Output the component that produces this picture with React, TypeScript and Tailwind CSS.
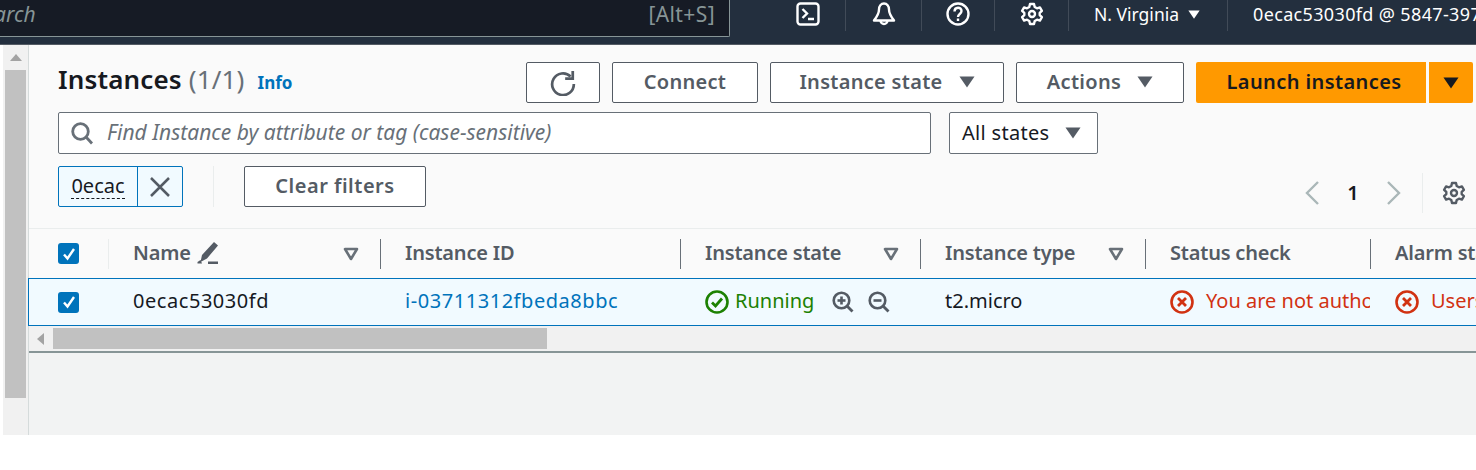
import React from 'react';

const font = { fontFamily: '"Noto Sans", "Liberation Sans", sans-serif' };

const Caret = ({ className = 'w-[16px] h-[12px] text-[#545b64]' }: { className?: string }) => (
  <svg viewBox="0 0 16 12" className={className}>
    <path d="M0.5 0.5h15L8 11.5z" fill="currentColor" />
  </svg>
);

const SortCaret = () => (
  <svg viewBox="0 0 16 14" className="w-[16px] h-[14px] text-[#687078]">
    <path d="M2 2h12L8 12z" fill="none" stroke="currentColor" strokeWidth="2.6" strokeLinejoin="round" />
  </svg>
);

const CheckBox = () => (
  <div className="w-[21px] h-[21px] rounded-[3px] bg-[#0073bb] flex items-center justify-center">
    <svg viewBox="0 0 16 16" className="w-[16px] h-[16px]">
      <path d="M3 8.5l3.5 4L13 3" fill="none" stroke="#fff" strokeWidth="2.4" />
    </svg>
  </div>
);

const Gear = ({ className }: { className: string }) => (
  <svg viewBox="0 0 24 24" className={className} fill="none" stroke="currentColor" strokeWidth="2.4" strokeLinejoin="round">
    <path d="M10 2h4l.7 3 2.3 1.3 2.9-.9 2 3.4-2.2 2.1v2.2l2.2 2.1-2 3.4-2.9-.9L14.700 19l-.7 3h-4l-.7-3L7 17.700l-2.900.9-2-3.400 2.200-2.100V10.900L2.100 8.800l2-3.400 2.900.9L9.300 5z" />
    <circle cx="12" cy="12" r="3" />
  </svg>
);

const Zoom = ({ minus }: { minus?: boolean }) => (
  <svg viewBox="0 0 22 22" className="w-[22px] h-[22px] text-[#545b64]" fill="none" stroke="currentColor">
    <circle cx="9.500" cy="9.500" r="7.800" strokeWidth="2.600" />
    <path d="M15 15l5.500 5.500" strokeWidth="2.800" />
    <path d="M5.500 9.500h8" strokeWidth="2.600" />
    {!minus && <path d="M9.500 5.500v8" strokeWidth="2.600" />}
  </svg>
);

const ErrorIcon = () => (
  <svg viewBox="0 0 24 24" className="w-[24px] h-[24px] shrink-0 text-[#d13212]" fill="none" stroke="currentColor">
    <circle cx="12" cy="12" r="10.500" strokeWidth="2.600" />
    <path d="M8 8l8 8M16 8l-8 8" strokeWidth="2.800" />
  </svg>
);

const Button = ({ children, className = '' }: { children: React.ReactNode; className?: string }) => (
  <div className={`h-[41px] pb-[2px] flex items-center justify-center border border-[#545b64] rounded-[2px] bg-white text-[#545b64] text-[20px] font-semibold tracking-[0.3px] ${className}`}>
    {children}
  </div>
);

const NavDivider = () => <div className="w-px h-[31px] shrink-0 bg-[#414b58]" />;

const NavIcon = ({ children, className }: { children: React.ReactNode; className: string }) => (
  <div className={`h-[31px] shrink-0 flex items-center justify-center text-white pb-[4px] ${className}`}>{children}</div>
);

const columns = 'grid grid-cols-[79px_272px_300px_240px_225px_225px_1fr]';

const HeadCell = ({ label, sort }: { label: string; sort?: boolean }) => (
  <div className="h-[30px] border-l border-[#687078] pl-[24px] pb-[2px] flex items-center text-[20px] font-semibold tracking-[-0.2px] text-[#545b64] whitespace-nowrap overflow-hidden">
    <span>{label}</span>
    {sort && <span className="ml-auto mr-[21px] mt-[2px] flex"><SortCaret /></span>}
  </div>
);

export default function App() {
  return (
    <div className="w-[1476px] h-[470px] bg-white overflow-hidden flex flex-col" style={font}>
      {/* top nav */}
      <header className="h-[45px] shrink-0 bg-[#232f3e] border-b border-[#545b64] flex items-start overflow-hidden">
        <div className="w-[730px] shrink-0 h-[37px] bg-[#161b25] border-r border-b border-[#879596] rounded-br-[2px] flex items-center justify-between pr-[14px] pb-[6px] text-[21px] text-[#879596] overflow-hidden">
          <span className="-ml-[27px] italic">Search</span>
          <span className="tracking-[0.4px]">[Alt+S]</span>
        </div>
        <div className="w-[41px] shrink-0" />
        <NavIcon className="w-[74px]">
          <svg viewBox="0 0 24 24" className="w-[24px] h-[24px]" fill="none" stroke="currentColor" strokeWidth="2.400">
            <rect x="1.500" y="1.500" width="21" height="21" rx="3" />
            <path d="M6.500 7l4.500 4.500-4.500 4.500M12 17h6" />
          </svg>
        </NavIcon>
        <NavDivider />
        <NavIcon className="w-[75px]">
          <svg viewBox="0 0 24 24" className="w-[24px] h-[24px]" fill="none" stroke="currentColor" strokeWidth="2.400" strokeLinejoin="round">
            <path d="M12 1.500c-3 0-5 2.500-5 6 0 4.500-2 7-5 11h20c-3-4-5-6.500-5-11 0-3.500-2-6-5-6z" />
            <path d="M8.500 18.500a3.500 3.500 0 0 0 7 0" />
          </svg>
        </NavIcon>
        <NavDivider />
        <NavIcon className="w-[72px]">
          <svg viewBox="0 0 24 24" className="w-[24px] h-[24px]" fill="none" stroke="currentColor" strokeWidth="2.400">
            <circle cx="12" cy="12" r="10.500" />
            <path d="M8.500 9.500c0-5 7-5 7-.5 0 3-3.500 3-3.500 6" />
            <path d="M12 16.500v2.500" />
          </svg>
        </NavIcon>
        <NavDivider />
        <NavIcon className="w-[73px]"><Gear className="w-[24px] h-[24px]" /></NavIcon>
        <NavDivider />
        <div className="w-[158px] shrink-0 h-[31px] pl-[25px] flex items-center gap-[9px] text-white text-[17.5px] whitespace-nowrap pb-[3px]">
          <span>N. Virginia</span>
          <Caret className="w-[12px] h-[9px] text-white" />
        </div>
        <NavDivider />
        <div className="pl-[25px] h-[31px] flex items-center text-white text-[18px] tracking-[0.35px] whitespace-nowrap pb-[3px]">0ecac53030fd @ 5847-3973-1234</div>
      </header>

      <div className="h-[390px] shrink-0 flex pl-[3px]">
        {/* vertical scrollbar */}
        <div className="w-[25px] bg-[#f1f1f1] flex flex-col items-center pt-[9px]">
          <svg viewBox="0 0 12 7" className="w-[12px] h-[7px] text-[#a3a3a3] mb-[9px]"><path d="M6 0l6 7H0z" fill="currentColor" /></svg>
          <div className="w-[21px] h-[328px] bg-[#c1c1c1]" />
        </div>

        <main className="flex-1 min-w-0 border-l border-[#d5dbdb] bg-[#f2f3f3] flex flex-col">
          <section className="bg-[#fafafa] h-[184px] shrink-0 border-b border-[#eaeded] pl-[29px] pr-[3px] pt-[17px] flex flex-col">
            <div className="flex items-center h-[41px]">
              <h1 className="text-[26px] font-semibold text-[#16191f] whitespace-nowrap -mt-[7px] tracking-[0.15px]">
                Instances <span className="font-normal text-[#687078]">(1/1)</span>
              </h1>
              <a className="ml-[13px] text-[17px] font-bold text-[#0073bb]">Info</a>
              <div className="ml-auto flex">
                <Button className="w-[74px]">
                  <svg viewBox="0 0 24 24" className="w-[26px] h-[26px] mt-[2px]" fill="none" stroke="currentColor" strokeWidth="2.500">
                    <path d="M19 6a10 10 0 1 0 3 7" />
                    <path d="M21 1v7h-7" />
                  </svg>
                </Button>
                <Button className="w-[146px] ml-[12px]">Connect</Button>
                <Button className="w-[234px] ml-[12px] gap-[16px]">Instance state <Caret /></Button>
                <Button className="w-[168px] ml-[12px] gap-[16px]">Actions <Caret /></Button>
                <div className="h-[41px] w-[230px] ml-[12px] pb-[2px] pl-[6px] bg-[#ff9900] rounded-l-[2px] flex items-center justify-center text-[20px] font-semibold tracking-[0.4px] text-[#16191f]">Launch instances</div>
                <div className="h-[41px] w-[44px] ml-[3px] bg-[#ff9900] rounded-r-[2px] flex items-center justify-center"><Caret className="w-[16px] h-[12px] text-[#16191f]" /></div>
              </div>
            </div>

            <div className="flex mt-[9px]">
              <div className="w-[873px] h-[42px] border border-[#687078] rounded-[2px] bg-white flex items-center pl-[11px] gap-[13px] text-[21px] italic text-[#687078]">
                <svg viewBox="0 0 24 24" className="w-[24px] h-[24px] text-[#687078]" fill="none" stroke="currentColor" strokeWidth="2.800">
                  <circle cx="10.500" cy="10.500" r="7.800" />
                  <path d="M16 16l6 6.500" />
                </svg>
                <span>Find Instance by attribute or tag (case-sensitive)</span>
              </div>
              <div className="w-[149px] h-[42px] ml-[18px] border border-[#687078] rounded-[2px] bg-white flex items-center pl-[12px] gap-[16px] text-[20px] tracking-[0.3px] text-[#16191f]">
                All states <Caret />
              </div>
            </div>

            <div className="flex items-start mt-[12px]">
              <div className="w-[125px] h-[41px] border border-[#0073bb] rounded-[2px] bg-[#f1faff] flex text-[20px] text-[#16191f]">
                <div className="w-[79px] border-r border-[#0073bb] flex items-center justify-center">
                  <span className="border-b border-dashed border-[#16191f] leading-[24px]">0ecac</span>
                </div>
                <div className="flex-1 flex items-center justify-center">
                  <svg viewBox="0 0 20 20" className="w-[20px] h-[20px] text-[#545b64]"><path d="M1 1l18 18M19 1L1 19" stroke="currentColor" strokeWidth="2.500" /></svg>
                </div>
              </div>
              <div className="w-px h-[41px] ml-[30px] bg-[#eaeded]" />
              <Button className="w-[182px] ml-[30px] tracking-[0.5px]">Clear filters</Button>
              <div className="ml-auto flex items-center h-[46px] mt-[4px] text-[#16191f] text-[20px] font-semibold">
                <svg viewBox="0 0 16 24" className="w-[16px] h-[24px] text-[#aab7b8]" fill="none" stroke="currentColor" strokeWidth="2.400"><path d="M14 1L3 12l11 11" /></svg>
                <span className="w-[66px] text-center">1</span>
                <svg viewBox="0 0 16 24" className="w-[16px] h-[24px] text-[#aab7b8]" fill="none" stroke="currentColor" strokeWidth="2.400"><path d="M2 1l11 11L2 23" /></svg>
                <div className="w-px h-[40px] ml-[20px] bg-[#eaeded]" />
                <span className="w-[50px] pl-[19px] text-[#545b64] flex"><Gear className="w-[24px] h-[24px]" /></span>
              </div>
            </div>
          </section>

          {/* table header */}
          <div className={`${columns} h-[49px] bg-[#fafafa] items-center shrink-0`}>
            <div className="pl-[29px] h-[30px] flex items-center"><CheckBox /></div>
            <div className="h-[30px] border-l border-[#eaeded] pl-[24px] pr-[21px] pb-[2px] flex items-center text-[20px] font-semibold tracking-[-0.2px] text-[#545b64] gap-[5px]">
              Name
              <svg viewBox="0 0 24 24" className="w-[24px] h-[24px]" fill="currentColor">
                <path d="M18 1l4 3.500-11 13-6.500 3.500 1.500-7zM1.500 21l3-2 1.500 3.500H1.500zM12 20.500h10v2.500H12z" />
              </svg>
              <span className="ml-auto mt-[2px] flex"><SortCaret /></span>
            </div>
            <HeadCell label="Instance ID" />
            <HeadCell label="Instance state" sort />
            <HeadCell label="Instance type" sort />
            <HeadCell label="Status check" />
            <HeadCell label="Alarm status" />
          </div>

          {/* selected row */}
          <div className={`${columns} h-[48px] -ml-px bg-[#f1faff] border-y border-l border-[#0073bb] items-center shrink-0 text-[20px] text-[#16191f]`}>
            <div className="pl-[29px] flex items-center"><CheckBox /></div>
            <div className="pl-[25px] pb-[2px] tracking-[0.55px]">0ecac53030fd</div>
            <div className="pl-[25px] pb-[2px] text-[#0073bb] whitespace-nowrap tracking-[0.55px]">i-03711312fbeda8bbc</div>
            <div className="pl-[25px] flex items-center whitespace-nowrap">
              <svg viewBox="0 0 24 24" className="w-[24px] h-[24px] text-[#1d8102]" fill="none" stroke="currentColor">
                <circle cx="12" cy="12" r="10.500" strokeWidth="2.600" />
                <path d="M7 12.500l3.500 3.500L17 8.500" strokeWidth="2.800" />
              </svg>
              <span className="ml-[6px] pb-[2px] text-[#1d8102]">Running</span>
              <span className="ml-[18px] flex gap-[14px]"><Zoom /><Zoom minus /></span>
            </div>
            <div className="pl-[25px] pb-[2px]">t2.micro</div>
            <div className="pl-[25px] flex items-center text-[#d13212] overflow-hidden whitespace-nowrap">
              <ErrorIcon />
              <span className="ml-[12px] pb-[2px]">You are not authorized</span>
            </div>
            <div className="pl-[25px] flex items-center text-[#d13212] overflow-hidden whitespace-nowrap">
              <ErrorIcon />
              <span className="ml-[12px] pb-[2px]">Users are not authorized</span>
            </div>
          </div>

          {/* horizontal scrollbar */}
          <div className="h-[27px] shrink-0 bg-[#f1f1f1] border-b-2 border-[#879596] flex items-center">
            <svg viewBox="0 0 7 12" className="w-[7px] h-[12px] ml-[8px] text-[#a3a3a3]"><path d="M0 6l7-6v12z" fill="currentColor" /></svg>
            <div className="w-[494px] h-[21px] ml-[9px] bg-[#c1c1c1]" />
          </div>
        </main>
      </div>
    </div>
  );
}
